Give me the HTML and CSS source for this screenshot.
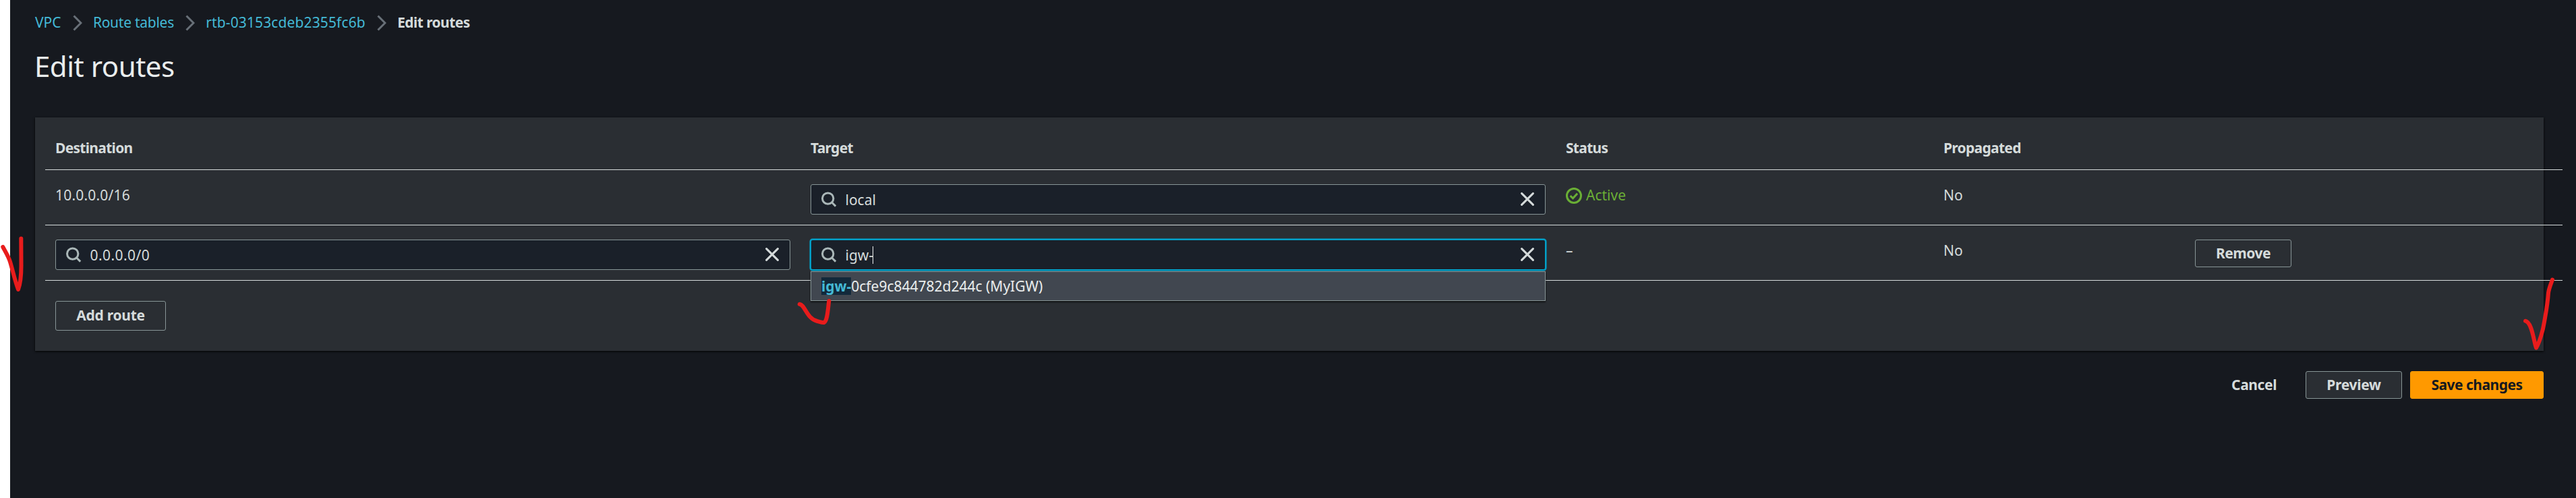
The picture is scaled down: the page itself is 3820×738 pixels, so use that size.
FILE: index.html
```
<!DOCTYPE html>
<html lang="en">
<head>
<meta charset="utf-8">
<title>Edit routes</title>
<link rel="stylesheet" href="styles.css">
</head>
<body>
<svg class="sprite" aria-hidden="true">
  <symbol id="search" viewBox="0 0 24 24"><circle cx="9.7" cy="11.1" r="8.2"/><path d="M15.6 17l5.6 5.6"/></symbol>
  <symbol id="close" viewBox="0 0 20 20"><path d="M1.6 1.6l16.8 16.8M18.4 1.6L1.6 18.4"/></symbol>
  <symbol id="chevron" viewBox="0 0 14 24"><path d="M1.5 1.5L12 12 1.5 22.5"/></symbol>
  <symbol id="check" viewBox="0 0 24 24"><circle cx="12" cy="12" r="10.5"/><path d="M6.6 12.2l3.9 3.6 6.6-7"/></symbol>
</svg>
<main class="page">
  <nav class="breadcrumbs">
    <a class="crumb">VPC</a>
    <svg class="chevron"><use href="#chevron"/></svg>
    <a class="crumb crumb-tables">Route tables</a>
    <svg class="chevron"><use href="#chevron"/></svg>
    <a class="crumb crumb-id">rtb-03153cdeb2355fc6b</a>
    <svg class="chevron"><use href="#chevron"/></svg>
    <span class="crumb crumb-current">Edit routes</span>
  </nav>
  <h1 class="title">Edit routes</h1>
  <section class="panel">
    <div class="table">
      <div class="row head">
        <div class="cell">Destination</div>
        <div class="cell">Target</div>
        <div class="cell">Status</div>
        <div class="cell">Propagated</div>
        <div class="cell"></div>
      </div>
      <div class="row">
        <div class="cell cidr">10.0.0.0/16</div>
        <div class="cell">
          <div class="field"><svg class="search"><use href="#search"/></svg><span class="value">local</span><svg class="close"><use href="#close"/></svg></div>
        </div>
        <div class="cell"><span class="status"><svg class="check"><use href="#check"/></svg>Active</span></div>
        <div class="cell">No</div>
        <div class="cell"></div>
      </div>
      <div class="row">
        <div class="cell">
          <div class="field"><svg class="search"><use href="#search"/></svg><span class="value ip">0.0.0.0/0</span><svg class="close"><use href="#close"/></svg></div>
        </div>
        <div class="cell">
          <div class="field focused"><svg class="search"><use href="#search"/></svg><span class="value">igw-</span><span class="caret"></span><svg class="close"><use href="#close"/></svg>
            <div class="dropdown"><span class="match">igw-</span><span>0cfe9c844782d244c (MyIGW)</span></div>
          </div>
        </div>
        <div class="cell">–</div>
        <div class="cell">No</div>
        <div class="cell"><button class="button remove">Remove</button></div>
      </div>
    </div>
    <button class="button add">Add route</button>
  </section>
  <footer class="actions">
    <button class="button link">Cancel</button>
    <button class="button preview">Preview</button>
    <button class="button primary">Save changes</button>
  </footer>
</main>
<svg class="marks" viewBox="0 0 3820 738">
  <path d="M4.3 366C8 373 12.500 380 15 388C19 401 22 416 27 429C31 418 31.500 408 31.500 394L31.300 353.500"/>
  <path d="M1185.700 450.700C1194 452 1196 472 1212 476C1216 477 1219 478.500 1222 478C1227 475 1227.500 460 1229.300 446"/>
  <path d="M3745 475.700C3755 478 3757 505 3761 515.500C3766 507 3771 490 3773 477C3776 460 3778 450 3779 434C3780 427 3783 420 3785 414.500"/>
</svg>
</body>
</html>
```
FILE: styles.css
```
* { box-sizing: border-box; }

body {
  margin: 0;
  width: 3820px;
  height: 738px;
  overflow: hidden;
  position: relative;
  background: #fff;
  color: #d5dbdb;
  font: 21px/33px "Noto Sans", sans-serif;
}

.page {
  margin-left: 15px;
  height: 738px;
  padding: 17px 48px 0 37px;
  background: #16191f;
}

svg { fill: none; flex: none; display: block; }
.sprite { position: absolute; width: 0; height: 0; }

.breadcrumbs { display: flex; height: 33px; }
.crumb { color: #44b9d6; white-space: nowrap; }
.crumb-tables { letter-spacing: -0.26px; }
.crumb-id { letter-spacing: 0.12px; }
.crumb-current { color: #d5dbdb; font-weight: 700; letter-spacing: -0.57px; }
.chevron { width: 14px; height: 24px; margin: 5px 16px 0 17.3px; stroke: #687078; stroke-width: 3; }

.title {
  margin: 23px 0 51px -1px;
  font-size: 42px;
  line-height: 50px;
  font-weight: 400;
  letter-spacing: -0.48px;
  color: #eaeded;
}

.panel {
  height: 346px;
  padding-left: 15px;
  background: #2a2e33;
  box-shadow: 0 1px 3px #000;
}

.table { width: 3733px; }
.row {
  display: grid;
  grid-template-columns: 1120px 1120px 560px 373px 1fr;
  height: 82px;
  padding-top: 21px;
  border-bottom: 1px solid #d5dbdb;
}
.cell { padding: 0 15px; }
.head { height: 78px; padding-top: 29px; font-weight: 700; letter-spacing: -0.7px; }
.cidr { letter-spacing: 0.2px; }

.field {
  position: relative;
  display: flex;
  align-items: center;
  width: 1090px;
  height: 45px;
  padding: 0 16px 0 15px;
  background: #1a2029;
  border: 1px solid #879596;
  border-radius: 3px;
}
.focused { border-color: #00a1c9; box-shadow: 0 0 0 1.5px #00a1c9; }
.value { padding-top: 1px; }
.search { width: 24px; height: 24px; margin: 0 11.5px 1px 0; stroke: #aab7b8; stroke-width: 3; }
.close { width: 20px; height: 20px; margin: 0 0 2px auto; stroke: #d5dbdb; stroke-width: 3; stroke-linecap: round; }
.ip { letter-spacing: 0.45px; }
.caret { width: 1px; height: 26px; background: #eaeded; margin-left: -1px; }

.dropdown {
  position: absolute;
  left: -1px;
  top: 46px;
  width: 1090px;
  height: 44px;
  padding: 5px 15px 0;
  display: flex;
  background: #414750;
  border: 1px solid #879596;
  box-shadow: 0 2px 2px rgba(0, 0, 0, 0.6);
  color: #eaeded;
}
.match {
  height: 26px;
  margin-top: 3px;
  line-height: 27px;
  background: #12293b;
  color: #44b9d6;
  font-weight: 700;
}

.status { display: flex; gap: 6px; color: #6aaf35; }
.check { width: 24px; height: 24px; margin-top: 5px; stroke: #6aaf35; stroke-width: 3; }

.button {
  display: block;
  height: 41px;
  padding: 0 0 1px;
  font: 700 21px/33px "Noto Sans", sans-serif;
  color: #d5dbdb;
  background: #2a2e33;
  border: 1px solid #879596;
  border-radius: 3px;
}
.remove { width: 143px; letter-spacing: -0.5px; }
.add { width: 164px; height: 44px; margin: 30px 0 0 15px; padding-bottom: 1px; letter-spacing: -0.25px; }

.actions { display: flex; justify-content: flex-end; margin-top: 30px; }
.link { background: none; border-color: transparent; padding-left: 0; padding-right: 0; margin-right: 42px; letter-spacing: -0.4px; }
.preview { width: 143px; margin-right: 12px; letter-spacing: -0.3px; }
.primary { width: 198px; background: #f90; border-color: #f90; color: #16191f; letter-spacing: -0.5px; }

/* Hand-drawn ticks over the page */
.marks {
  position: absolute;
  left: 0;
  top: 0;
  width: 3820px;
  height: 738px;
  stroke: #e81c1c;
  stroke-width: 6;
  stroke-linecap: round;
  stroke-linejoin: round;
  pointer-events: none;
}
```
